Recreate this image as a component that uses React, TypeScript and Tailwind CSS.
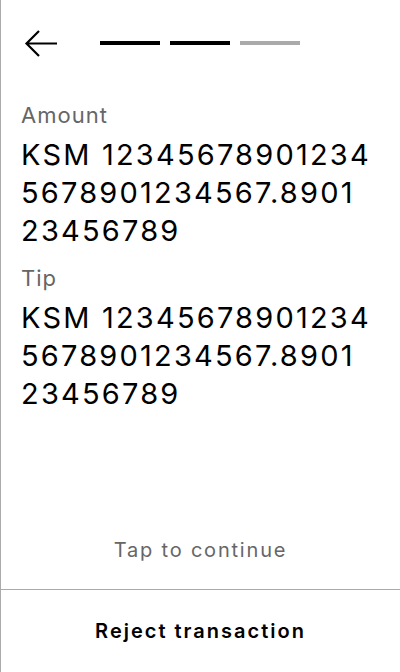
function BackArrow() {
  return (
    <svg width="34" height="30" viewBox="0 0 34 30" fill="none" className="block">
      <path
        d="M33 14.5H2M15 2L2.5 14.5L15 27"
        stroke="#000"
        strokeWidth="2.2"
        strokeLinecap="butt"
        strokeLinejoin="miter"
      />
    </svg>
  );
}

const fields = [
  { label: "Amount", value: "KSM 123456789012345678901234567.890123456789" },
  { label: "Tip", value: "KSM 123456789012345678901234567.890123456789" },
];

export default function App() {
  return (
    <div
      className="flex h-[672px] w-[400px] flex-col border-l border-[#ababab] bg-white text-black"
      style={{ fontFamily: "Inter, 'Noto Sans', sans-serif" }}
    >
      <div className="flex-1">
        <div className="flex items-center pl-[23px] pt-[29px]">
          <BackArrow />
          <div className="ml-[42px] mt-[-3px] flex gap-[10px]">
            <div className="h-[4px] w-[60px] bg-black" />
            <div className="h-[4px] w-[60px] bg-black" />
            <div className="h-[4px] w-[60px] bg-[#aaaaaa]" />
          </div>
        </div>

        <div className="mt-[42px] flex flex-col gap-[14px] pl-5 pr-[29px]">
          {fields.map((f) => (
            <div key={f.label}>
              <p className="mb-[7px] text-[22px] leading-[28px] tracking-[1px] text-[#666666]">{f.label}</p>
              <p className="break-all text-[29px] leading-[38px] tracking-[2.2px]">{f.value}</p>
            </div>
          ))}
        </div>
      </div>

      <p className="pb-[25px] text-center text-[20px] leading-[28px] tracking-[1.8px] text-[#666666]">
        Tap to continue
      </p>

      <button className="flex h-[83px] items-center justify-center border-t border-[#ababab] text-[20px] font-semibold tracking-[2px]">
        Reject transaction
      </button>
    </div>
  );
}
